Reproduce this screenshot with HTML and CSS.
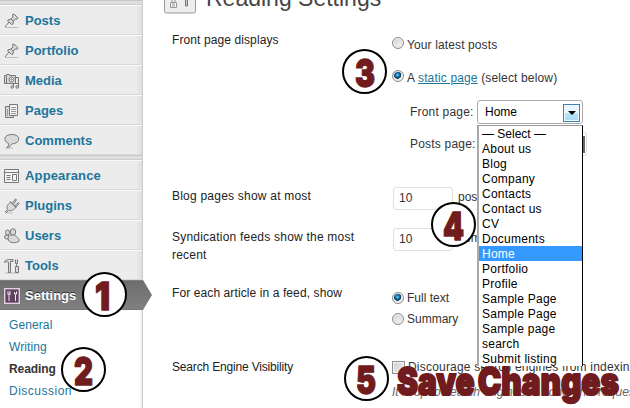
FILE: index.html
```html
<!DOCTYPE html>
<html lang="en">
<head>
<meta charset="utf-8">
<title>Reading Settings</title>
<link rel="stylesheet" href="styles.css">
</head>
<body>
<div class="page">
  <nav class="sidebar">
    <div class="separator first"></div>
    <a class="item"><svg class="icon" viewBox="0 0 16 16"><path class="shade" d="M1 14.500h13"/><path class="metal" d="M1 14l4-5M4 7l3-1 2-2-.5-2.500L10 1l4 4-.8 1.200L11 6 9.500 8l-.5 3-1.200.5L3.500 8z"/><path d="M7 6l2.500 2.500"/></svg><span>Posts</span></a>
    <a class="item"><svg class="icon" viewBox="0 0 16 16"><path class="shade" d="M1 14.500h13"/><path class="metal" d="M1 14l4-5M4 7l3-1 2-2-.5-2.500L10 1l4 4-.8 1.200L11 6 9.500 8l-.5 3-1.200.5L3.500 8z"/><path d="M7 6l2.500 2.500"/></svg><span>Portfolio</span></a>
    <a class="item"><svg class="icon" viewBox="0 0 16 16"><path class="metal" d="M.5 2.500h2v-1h3v1h6v8H.5z"/><path d="M2.500 3v7"/><circle class="paper" cx="7.500" cy="6.500" r="2.500"/><circle cx="7.500" cy="6.500" r=".7"/><path d="M12 4.500h2.500v9M9.500 13.500v-3h5"/><circle class="metal" cx="8.200" cy="14" r="1.300"/><circle class="metal" cx="13.200" cy="14" r="1.300"/></svg><span>Media</span></a>
    <a class="item"><svg class="icon" viewBox="0 0 16 16"><path class="metal" d="M1.500 3.500h8v11h-8z"/><path class="paper" d="M5.500 1.500h8v11h-8z"/><path class="thin" d="M7 4.500h5M7 6.500h5M7 8.500h5M7 10.500h5M3.500 6v7"/></svg><span>Pages</span></a>
    <a class="item"><svg class="icon" viewBox="0 0 16 16"><path class="shade" d="M1 15h8"/><path class="metal" d="M4.500 10.500C-1 8-.5 1.500 8 1.500c9 0 9 9 0 9.300L4.500 14.500H3c1.500-1 1.500-2 1.500-4z"/></svg><span>Comments</span></a>
    <div class="separator"></div>
    <a class="item"><svg class="icon" viewBox="0 0 16 16"><path class="paper" d="M.5 1.500h14v13H.5z"/><path d="M1 4.500h13M8.500 6.500h4v6h-4z"/><path d="M2.500 7.500h4M2.500 9.500h4M2.500 11.500h4"/></svg><span class="appearance">Appearance</span></a>
    <a class="item"><svg class="icon" viewBox="0 0 16 16"><path class="shade" d="M1 15h8"/><path class="metal" d="M1 14l2.500-2.500C2 8.500 4 6 7 4l5 5c-2 3-5 4.500-7.500 3.500L2 15M8.500 5l3-4 1 .7-2.500 4M11 7.500l3.500-3 .7 1L12 9M6 3.500l6 6"/></svg><span>Plugins</span></a>
    <a class="item"><svg class="icon" viewBox="0 0 16 16"><ellipse class="metal" cx="3.500" cy="4.500" rx="2" ry="2.500"/><ellipse class="metal" cx="3" cy="9" rx="2.500" ry="2"/><ellipse class="metal" cx="9" cy="4" rx="2.700" ry="3.300"/><path class="metal" d="M6.500 7C4 9 3.500 10 5 13c1 2 8 2.500 10 0 1-2-2-4-4.500-6z"/></svg><span>Users</span></a>
    <a class="item"><svg class="icon" viewBox="0 0 16 16"><path class="shade" d="M1 15h14"/><path class="metal" d="M.5 3.500C2 1.500 4 1.500 9 1.500v2H6.500v11h-2v-10C3 3.500 2 3.500.5 4.500zM11.500 1.500v4h2v-4M11.500 8.500h3v6h-3zM12.500 5.500v3"/></svg><span>Tools</span></a>
    <a class="item current"><svg class="icon" viewBox="0 0 16 16"><rect class="plate" x=".7" y=".7" width="14.600" height="14.600"/><path class="slots" d="M4 3v4M6 3v4M4 6h2M5 7v6M10.500 4v2h2V3.500M11.500 6v7"/></svg><span>Settings</span></a>
    <div class="submenu">
      <a>General</a>
      <a>Writing</a>
      <a class="selected">Reading</a>
      <a class="discussion">Discussion</a>
    </div>
  </nav>
  <main class="content">
    <header class="heading">
      <svg class="heading-icon" viewBox="0 0 32 14"><rect class="button" x=".5" y="-18" width="31" height="31" rx="2"/><path class="lock" d="M6.500 2.500h6v5h-6zM8 2V0M11 2V0M8 4h3M8 6h3"/><path class="bar" d="M21.500-2v8h2v-8"/></svg>
      <h1>Reading Settings</h1>
    </header>
    <section class="row front">
      <div class="label displays">Front page displays</div>
      <div class="field">
        <label class="choice latest"><i class="radio"></i>Your latest posts</label>
        <label class="choice static"><i class="radio on"></i><span>A <a>static page</a> (select below)</span></label>
        <div class="picker">
          <span class="caption">Front page:</span>
          <div class="select"><span>Home</span><b class="arrow"></b>
            <ul class="options">
              <li>— Select —</li><li>About us</li><li>Blog</li><li>Company</li><li>Contacts</li><li>Contact us</li><li>CV</li><li>Documents</li><li class="active">Home</li><li>Portfolio</li><li>Profile</li><li>Sample Page</li><li>Sample Page</li><li>Sample page</li><li>search</li><li>Submit listing</li>
            </ul>
          </div>
        </div>
        <div class="picker posts">
          <span class="caption">Posts page:</span>
          <div class="select behind"></div>
        </div>
      </div>
    </section>
    <section class="row blog">
      <div class="label spaced">Blog pages show at most</div>
      <div class="field number"><span class="input">10</span><span>posts</span></div>
    </section>
    <section class="row feeds">
      <div class="label wide spaced">Syndication feeds show the most recent</div>
      <div class="field number"><span class="input">10</span><span>items</span></div>
    </section>
    <section class="row article">
      <div class="label displays">For each article in a feed, show</div>
      <div class="field">
        <label class="choice full"><i class="radio on"></i>Full text</label>
        <label class="choice"><i class="radio"></i>Summary</label>
      </div>
    </section>
    <section class="row visibility">
      <div class="label search">Search Engine Visibility</div>
      <div class="field">
        <label class="choice check"><i class="checkbox"></i>Discourage search engines from indexing this site</label>
        <p>It is up to search engines to honor this request.</p>
      </div>
    </section>
  </main>
  <svg class="markers" viewBox="0 0 630 408">
    <g class="rings"><circle cx="104.500" cy="294.500" r="21.500"/><circle cx="83.500" cy="369.500" r="21.500"/><circle cx="364.500" cy="71.500" r="21.500"/><circle cx="453.500" cy="224.500" r="21.500"/><circle cx="366.500" cy="378.500" r="21.500"/></g>
    <g class="strong">
      <text x="95" y="309.500" textLength="15" lengthAdjust="spacingAndGlyphs">1</text>
      <text x="74" y="384.500" textLength="19" lengthAdjust="spacingAndGlyphs">2</text>
      <text x="355" y="86.500" textLength="20" lengthAdjust="spacingAndGlyphs">3</text>
      <text x="443" y="239.500" textLength="21" lengthAdjust="spacingAndGlyphs">4</text>
      <text x="356" y="393.500" textLength="20" lengthAdjust="spacingAndGlyphs">5</text>
      <text class="phrase" x="397" y="395" textLength="222" lengthAdjust="spacingAndGlyphs">Save Changes</text>
    </g>
  </svg>
</div>
</body>
</html>
```
FILE: styles.css
```css
* { box-sizing: border-box; }
body { margin: 0; background: #fff; color: #333; font: 12px/18px "Liberation Sans", Arial, sans-serif; overflow: hidden; }
.page { position: relative; display: flex; width: 630px; height: 408px; overflow: hidden; }

.sidebar { width: 143px; flex: none; display: flex; flex-direction: column; background: linear-gradient(90deg, #ececec 136px, #dedede 142px, #ccc 142px); }
.separator { height: 5px; flex: none; margin-right: 1px; background: #dfdfdf; border-top: 1px solid #c8c8c8; border-bottom: 1px solid #ccc; }
.item { height: 30px; flex: none; display: flex; align-items: center; gap: 5px; padding: 1px 0 0 4px; margin-right: 1px; border-top: 1px solid #f9f9f9; border-bottom: 1px solid #d8d8d8; color: #21759b; font-size: 13px; font-weight: bold; letter-spacing: 0; }
.item span { padding-top: 1px; }
.item .appearance { letter-spacing: .15px; }
.icon { width: 16px; height: 16px; flex: none; fill: none; stroke: #777; stroke-width: 1; overflow: visible; }
.metal { fill: #d9d9d9; }
.paper { fill: #f5f5f5; }
.shade { stroke: #bbb; }
.thin { stroke: #999; }
.item.current { position: relative; margin-right: 0; border-color: #777; border-top-color: #808080; background: linear-gradient(#6d6d6d, #808080); color: #fff; text-shadow: 0 -1px 0 #333; }
.item.current::after { content: ""; position: absolute; left: 143px; top: -1px; width: 9px; height: 30px; background: linear-gradient(#6d6d6d, #808080); clip-path: polygon(0 0, 100% 50%, 0 100%); }
.plate { fill: #614060; stroke: #ded0de; stroke-width: 1.4; }
.slots { stroke: #f2e9f2; }
.submenu { flex: 1; display: flex; flex-direction: column; padding: 4px 0 0 9px; background: linear-gradient(90deg, #fff 139px, #ececec 142px, #ccc 142px); color: #21759b; line-height: 22px; letter-spacing: .1px; }
.submenu .selected { color: #333; font-weight: bold; letter-spacing: -.1px; }
.submenu .discussion { letter-spacing: .5px; }

.content { flex: 1; min-width: 0; }
.heading { height: 20px; display: flex; align-items: flex-start; padding-left: 21px; gap: 10px; }
.heading-icon { width: 32px; height: 14px; flex: none; }
.button { fill: #eee; stroke: #999; }
.lock { fill: #f7f7f7; stroke: #999; }
.bar { fill: #ccc; stroke: #777; }
h1 { margin: -16px 0 0; color: #464646; font-size: 23px; font-weight: normal; line-height: 28px; white-space: nowrap; }
.row { display: grid; grid-template-columns: 220px 1fr; padding-left: 29px; white-space: nowrap; }
.label { color: #222; }
.wide { width: 200px; white-space: normal; }
.spaced { letter-spacing: .22px; }
.displays { letter-spacing: .1px; }
.search { letter-spacing: -.17px; }
.front { height: 157px; }
.front .label { padding-top: 11px; }
.blog { height: 41px; padding-top: 10px; }
.feeds { height: 59px; padding-top: 10px; }
.article { height: 75px; padding-top: 7px; }
.visibility { height: 56px; padding-top: 6px; }
.choice { display: flex; align-items: center; height: 21px; gap: 3px; letter-spacing: .12px; }
.latest { height: 33px; margin-top: 8px; }
.static { height: 33px; letter-spacing: .15px; }
.choice a { color: #21759b; text-decoration: underline; }
.radio { width: 12px; height: 12px; flex: none; border: 1px solid #8c8c8c; border-radius: 50%; background: radial-gradient(circle at 60% 65%, #eee, #ccc); box-shadow: inset 0 0 0 1px #f5f5f5; }
.radio.on { background: radial-gradient(circle at 45% 40%, #8ed4f5 0, #168ac2 1.500px, #13344e 3.500px, #e8e8e8 4px); }
.front .choice .radio { margin-top: -3px; }
.article .choice { letter-spacing: 0; }
.picker { display: flex; align-items: center; height: 24px; margin-top: 6px; padding-left: 18px; }
.picker.posts { margin-top: 8px; }
.caption { width: 67px; letter-spacing: .2px; }
.select { position: relative; width: 106px; height: 24px; display: flex; align-items: center; justify-content: space-between; padding: 0 2px 0 7px; border: 1px solid #aaa; border-radius: 3px; background: #fff; color: #000; }
.arrow { width: 17px; height: 18px; margin-top: 1px; display: grid; place-items: center; border: 1px solid #3c7fb1; background: linear-gradient(#e9f6fd 50%, #bce4fa 50%, #a8d9f5); box-shadow: inset 0 0 0 1px #eefaff; }
.arrow::before { content: ""; border: 4px solid transparent; border-top-color: #000; border-bottom: 0; }
.select.behind { width: 110px; border-color: #dfdfdf; }
.select.behind::after { content: ""; margin-left: auto; margin-right: -1px; width: 2px; height: 17px; background: #666; }
.options { position: absolute; z-index: 2; top: 24px; left: -1px; width: 106px; margin: 0; padding: 0; border-left: 2px solid #aaa; border-right: 1px solid #000; border-top: 1px solid #999; background: #fff; color: #000; list-style: none; letter-spacing: .25px; }
.options li { height: 15px; padding: 0 0 0 3px; line-height: 16px; }
.options li:first-child { letter-spacing: 0; }
.options .active { background: #3399ff; color: #fff; }
.number { display: flex; gap: 5px; }
.number span { padding-top: 1px; }
.number .input { width: 60px; height: 23px; margin-left: 1px; padding: 1px 0 0 5px; border: 1px solid #dfdfdf; border-radius: 3px; line-height: 18px; }
.full { margin-top: 3px; }
.check { height: 18px; gap: 3px; margin-top: 0; letter-spacing: .2px; }
.checkbox { width: 13px; height: 13px; flex: none; border: 1px solid #8e8f8f; background: linear-gradient(135deg, #cbd0d5, #f2f2f2); box-shadow: inset 0 0 0 1px #f4f4f4; }
.visibility p { margin: 7px 0 0; color: #666; font-style: italic; }

.markers { position: absolute; z-index: 4; inset: 0; width: 630px; height: 408px; pointer-events: none; }
.rings { fill: #fff; stroke: #000; stroke-width: 2; }
.strong { fill: #701c1f; stroke: #701c1f; stroke-width: 1.4; stroke-linejoin: round; font: 900 39px Inter, sans-serif; }
.phrase { stroke-width: 2; word-spacing: -4px; }
```
